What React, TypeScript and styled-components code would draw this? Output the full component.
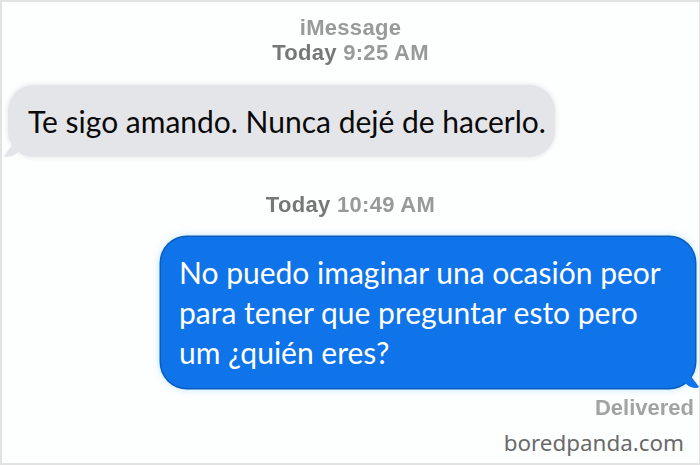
import React from "react";
import styled, { createGlobalStyle } from "styled-components";

const GlobalStyle = createGlobalStyle`
	html, body {
		margin: 0;
		padding: 0;
		background: #ffffff;
	}
	* {
		box-sizing: border-box;
	}
`;

const Screen = styled.div`
	width: 700px;
	height: 465px;
	border: 2px solid #e2e2e2;
	border-right-width: 1px;
	background: #fdfefe;
	display: flex;
	flex-direction: column;
	overflow: hidden;
`;

const Stamp = styled.div<{ $top: number }>`
	margin-top: ${(p) => p.$top}px;
	display: flex;
	flex-direction: column;
	align-items: center;
	font-family: "Liberation Sans", Arial, sans-serif;
	font-size: 22px;
	line-height: 25px;
	letter-spacing: 0.3px;
	color: #8e8e8e;
	filter: blur(0.6px);
`;

const Service = styled.span`
	font-weight: bold;
	color: #9a9a9a;
`;

const Day = styled.b`
	color: #777777;
`;

const Time = styled.span`
	font-weight: bold;
	color: #999999;
`;

const Row = styled.div<{ $side: "left" | "right"; $top: number }>`
	margin-top: ${(p) => p.$top}px;
	display: flex;
	justify-content: ${(p) => (p.$side === "left" ? "flex-start" : "flex-end")};
	padding: ${(p) => (p.$side === "left" ? "0 0 0 6px" : "0 4px 0 0")};
`;

const Bubble = styled.div<{ $sent?: boolean }>`
	position: relative;
	flex: none;
	white-space: nowrap;
	font-family: Lato, "Noto Sans", sans-serif;
	font-size: 30px;
	line-height: 40px;
	border-radius: 26px;
	background: ${(p) => (p.$sent ? "#0f73ea" : "#e4e5e9")};
	color: ${(p) => (p.$sent ? "#ffffff" : "#0a0a0a")};
	width: ${(p) => (p.$sent ? "534px" : "547px")};
	padding: ${(p) => (p.$sent ? "15px 0 16px 18px" : "16px 0 16px 20px")};
	box-shadow: ${(p) =>
		p.$sent
			? "0 0 0 1.5px #0b5dbd, 0 0 6px 2px rgba(150, 215, 245, 0.55)"
			: "0 0 4px 1px #e8e9ec"};

	&::after {
		content: "";
		position: absolute;
		bottom: 0;
		${(p) => (p.$sent ? "right: -5px;" : "left: -5px;")}
		width: 18px;
		height: 14px;
		background: ${(p) => (p.$sent ? "#0f73ea" : "#e4e5e9")};
		border-radius: ${(p) => (p.$sent ? "0 0 4px 14px" : "0 0 14px 4px")};
		clip-path: ${(p) =>
			p.$sent
				? "polygon(0 0, 40% 0, 100% 100%, 0 100%)"
				: "polygon(60% 0, 100% 0, 100% 100%, 0 100%)"};
	}
`;

const Status = styled.div`
	margin-top: 8px;
	align-self: flex-end;
	padding-right: 5px;
	font-family: "Liberation Sans", Arial, sans-serif;
	font-weight: bold;
	font-size: 22px;
	line-height: 24px;
	color: #a2a2a2;
	filter: blur(0.6px);
`;

const Watermark = styled.div`
	margin-top: 8px;
	align-self: flex-end;
	padding-right: 15px;
	font-family: "Noto Sans", "Open Sans", sans-serif;
	font-size: 22.4px;
	line-height: 30px;
	color: #6a6a6a;
`;

export default function App() {
	return (
		<>
			<GlobalStyle />
			<Screen>
				<Stamp $top={13}>
					<Service>iMessage</Service>
					<span>
						<Day>Today</Day> <Time>9:25 AM</Time>
					</span>
				</Stamp>
				<Row $side="left" $top={20}>
					<Bubble>Te sigo amando. Nunca dejé de hacerlo.</Bubble>
				</Row>
				<Stamp $top={35}>
					<span>
						<Day>Today</Day> <Time>10:49 AM</Time>
					</span>
				</Stamp>
				<Row $side="right" $top={20}>
					<Bubble $sent>
						No puedo imaginar una ocasión peor
						<br />
						para tener que preguntar esto pero
						<br />
						um ¿quién eres?
					</Bubble>
				</Row>
				<Status>Delivered</Status>
				<Watermark>boredpanda.com</Watermark>
			</Screen>
		</>
	);
}
